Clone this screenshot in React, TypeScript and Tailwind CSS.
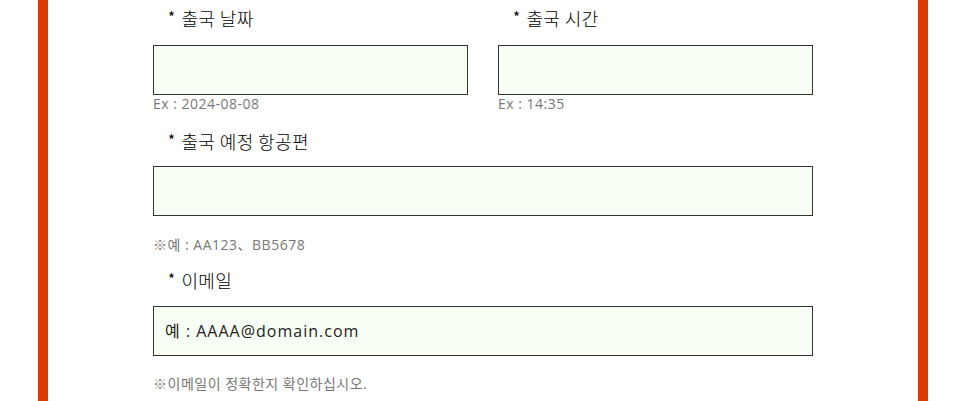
import React from "react";

const latin = { fontFamily: '"Open Sans", "Noto Sans CJK KR", sans-serif' };

function Label({ text }: { text: string }) {
  return (
    <div
      className="h-[36px] leading-[36px] pl-[15px] text-[18px] text-black flex items-center font-light tracking-[0.4px]"
      style={{ fontFamily: '"Noto Sans CJK KR", "Noto Sans", sans-serif' }}
    >
      <span className="text-[15px] mr-[6px] -mt-[3px] font-normal">*</span>
      <span>{text}</span>
    </div>
  );
}

function Input({ placeholder }: { placeholder?: string }) {
  return (
    <div
      className="h-[50px] w-full border border-[#333] bg-[#f8fff4] flex items-center pl-[11px] text-[16px] text-[#222] tracking-[1px]"
      style={latin}
    >
      {placeholder}
    </div>
  );
}

function Hint({ text }: { text: string }) {
  return (
    <div className="h-[18px] leading-[18px] text-[14px] text-[#777] tracking-[0.5px]" style={latin}>
      {text}
    </div>
  );
}

export default function App() {
  return (
    <div className="w-[955px] h-[401px] bg-white overflow-hidden">
      <div className="ml-[38px] w-[890px] h-[401px] border-l-[10px] border-r-[10px] border-[#dd3c00] px-[105px]">
        <div className="flex gap-[30px]">
          <div className="flex-1">
            <Label text="출국 날짜" />
            <div className="mt-[9px]">
              <Input />
            </div>
            <Hint text="Ex : 2024-08-08" />
          </div>
          <div className="flex-1">
            <Label text="출국 시간" />
            <div className="mt-[9px]">
              <Input />
            </div>
            <Hint text="Ex : 14:35" />
          </div>
        </div>
        <div className="mt-[10px]">
          <Label text="출국 예정 항공편" />
        </div>
        <div className="mt-[7px]">
          <Input />
        </div>
        <div className="mt-[20px]">
          <Hint text="※예 : AA123、BB5678" />
        </div>
        <div className="mt-[8px]">
          <Label text="이메일" />
        </div>
        <div className="mt-[8px]">
          <Input placeholder="예 : AAAA@domain.com" />
        </div>
        <div className="mt-[19px]">
          <Hint text="※이메일이 정확한지 확인하십시오." />
        </div>
      </div>
    </div>
  );
}
